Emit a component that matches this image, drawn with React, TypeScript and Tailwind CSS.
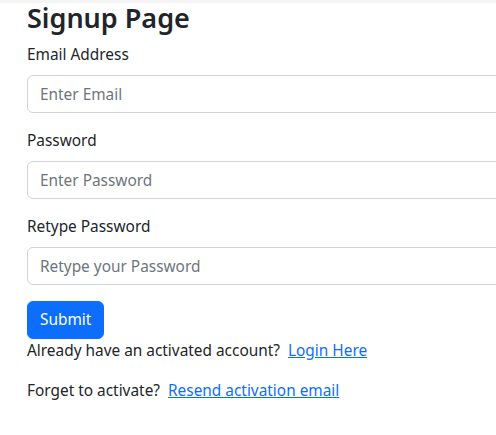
import React from 'react';

function Field({ label, type, placeholder }: { label: string; type: string; placeholder: string }) {
  return (
    <div className="mb-4">
      <label className="mb-2 block">{label}</label>
      <input
        type={type}
        placeholder={placeholder}
        className="block h-[38px] w-[640px] rounded-[6px] border border-[#ced4da] bg-white px-3 py-1.5 text-[15.4px] text-[#212529] placeholder:text-[#6c757d] focus:outline-none"
      />
    </div>
  );
}

export default function App() {
  return (
    <div
      className="relative min-h-[435px] w-full overflow-hidden bg-white text-[15.4px] leading-6 text-[#212529]"
      style={{ fontFamily: '"Noto Sans", "Open Sans", sans-serif' }}
    >
      <div className="absolute inset-x-0 top-0 h-[3px] bg-[#f5f5f5]" />
      <div className="relative pl-[27px]">
        <h1 className="mb-2 h-[35px] text-[27px] font-semibold leading-[35px]">Signup Page</h1>
        <form>
          <Field label="Email Address" type="email" placeholder="Enter Email" />
          <Field label="Password" type="password" placeholder="Enter Password" />
          <Field label="Retype Password" type="password" placeholder="Retype your Password" />
          <button
            type="button"
            className="h-[38px] rounded-[6px] border border-[#0d6efd] bg-[#0d6efd] px-3 text-[15.4px] leading-6 text-white"
          >
            Submit
          </button>
        </form>
        <p className="mb-4">
          Already have an activated account?&nbsp;{' '}
          <a href="#" className="text-[#0d6efd] underline">Login Here</a>
        </p>
        <p className="mb-4">
          Forget to activate?&nbsp;{' '}
          <a href="#" className="text-[#0d6efd] underline">Resend activation email</a>
        </p>
      </div>
    </div>
  );
}
